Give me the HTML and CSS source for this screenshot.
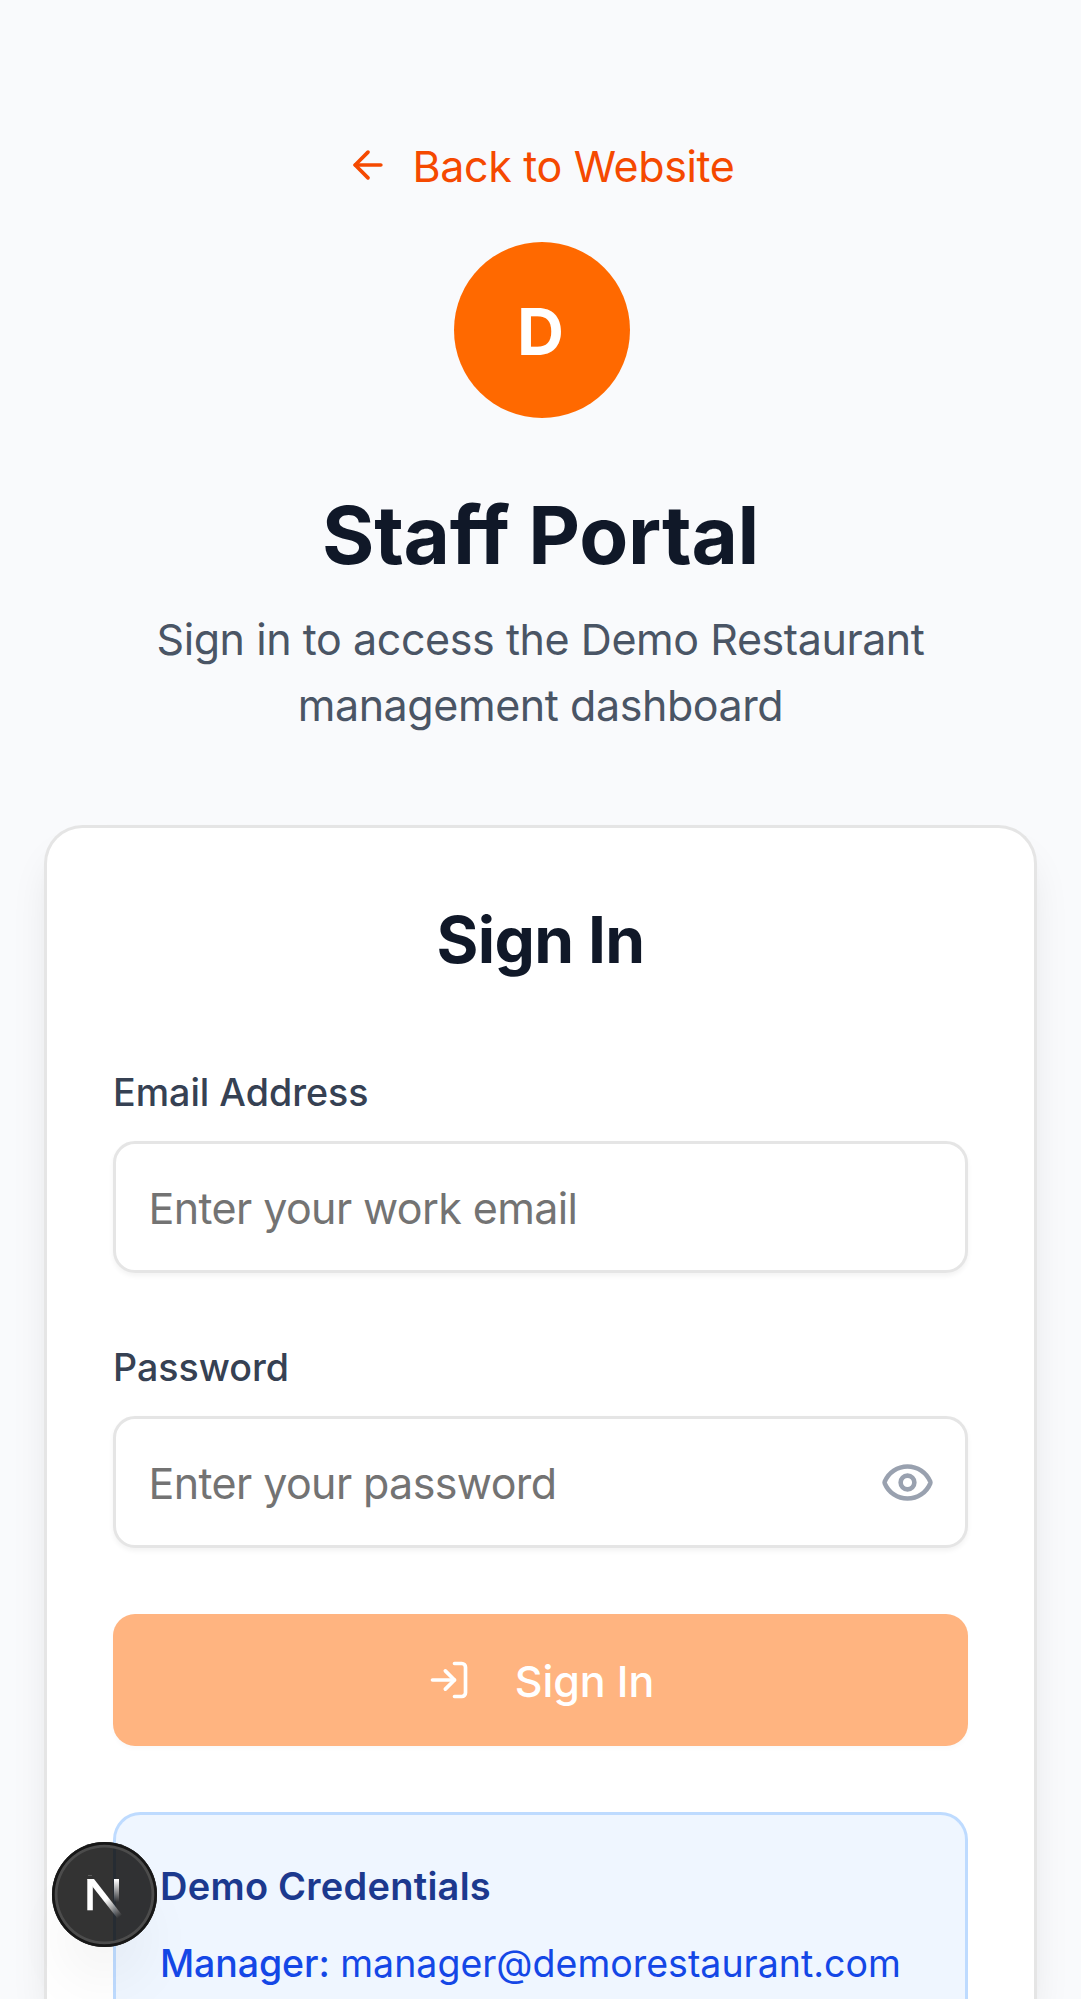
FILE: index.html
```html
<!DOCTYPE html>
<html lang="en">
<head>
<meta charset="utf-8">
<title>Staff Portal</title>
<link rel="stylesheet" href="styles.css">
</head>
<body>
<main class="page">
  <header class="intro">
    <a class="back" href="#">
      <svg class="icon" viewBox="0 0 24 24"><path d="m12 19-7-7 7-7"/><path d="M19 12H5"/></svg>
      <span class="back-text">Back to Website</span>
    </a>
    <div class="logo">D</div>
    <h1 class="title">Staff Portal</h1>
    <p class="lead">Sign in to access the Demo Restaurant<br>management dashboard</p>
  </header>
  <section class="card">
    <h2 class="card-title">Sign In</h2>
    <form class="form">
      <div class="field">
        <label class="label" for="email">Email Address</label>
        <div class="control"><input class="input" id="email" type="email" placeholder="Enter your work email"></div>
      </div>
      <div class="field">
        <label class="label" for="password">Password</label>
        <div class="control">
          <input class="input" id="password" type="password" placeholder="Enter your password">
          <svg class="icon eye" viewBox="0 0 24 24"><path d="M2.062 12.348a1 1 0 0 1 0-.696 10.75 10.75 0 0 1 19.876 0 1 1 0 0 1 0 .696 10.75 10.75 0 0 1-19.876 0"/><circle cx="12" cy="12" r="3"/></svg>
        </div>
      </div>
      <button class="submit" type="button">
        <svg class="icon" viewBox="0 0 24 24"><path d="m10 17 5-5-5-5"/><path d="M15 12H3"/><path d="M15 3h4a2 2 0 0 1 2 2v14a2 2 0 0 1-2 2h-4"/></svg>
        <span class="submit-text">Sign In</span>
      </button>
    </form>
    <div class="demo">
      <h3 class="demo-title">Demo Credentials</h3>
      <p class="demo-row"><strong class="demo-role">Manager:</strong> <span class="demo-mail">manager@demorestaurant.com</span></p>
    </div>
  </section>
</main>
<div class="badge">
  <svg class="badge-mark" viewBox="0 0 105 105">
    <defs>
      <linearGradient id="diag" x1="56" y1="56" x2="69" y2="74" gradientUnits="userSpaceOnUse"><stop stop-color="#fff"/><stop offset="1" stop-color="#fff" stop-opacity="0"/></linearGradient>
      <linearGradient id="stem" x1="0" y1="38" x2="0" y2="60" gradientUnits="userSpaceOnUse"><stop stop-color="#fff"/><stop offset="1" stop-color="#fff" stop-opacity="0"/></linearGradient>
    </defs>
    <rect x="35.3" y="37" width="5.5" height="31.3" fill="#fff"/>
    <path d="M35.3 37H42L70 73L65.5 76.5L40.8 45Z" fill="url(#diag)"/>
    <rect x="62" y="37" width="5" height="23" fill="url(#stem)"/>
    <rect x="36" y="33" width="4" height="1" fill="#fff" opacity=".2"/>
  </svg>
</div>
</body>
</html>
```
FILE: styles.css
```css
* { box-sizing: border-box; margin: 0; }
html, body { height: 1999px; overflow: hidden; }
body {
  position: relative;
  background: #f9fafc;
  color: #101828;
  font-family: Inter, sans-serif;
  font-size: 43px;
  line-height: 66px;
}
.page { display: flex; flex-direction: column; height: 1999px; padding: 132px 44px 0; overflow: hidden; }
.icon {
  width: 44px;
  height: 44px;
  flex: none;
  fill: none;
  stroke: currentColor;
  stroke-width: 2;
  stroke-linecap: round;
  stroke-linejoin: round;
}
.intro { display: flex; flex-direction: column; align-items: center; text-align: center; }
.back { display: flex; align-items: center; gap: 22px; height: 66px; color: #f54900; text-decoration: none; }
.back-text { padding-top: 2px; letter-spacing: -.36px; }
.logo {
  width: 176px;
  height: 176px;
  margin: 44px 0 0 2px;
  padding-right: 2px;
  border-radius: 50%;
  background: #ff6900;
  color: #fff;
  font-size: 65px;
  font-weight: 700;
  line-height: 179px;
}
.title { margin-top: 67px; font-size: 80px; font-weight: 700; letter-spacing: -.25px; line-height: 99px; font-variant-ligatures: none; }
.lead { margin-top: 22px; color: #4a5565; letter-spacing: -.43px; }
.card {
  display: flex;
  flex: 1;
  flex-direction: column;
  margin-top: 87px;
  padding: 67px 66px 0;
  border: 3px solid #e5e5e5;
  border-bottom: 0;
  border-radius: 38.5px 38.5px 0 0;
  background: #fff;
  box-shadow: 0 27px 41px -8px rgb(0 0 0 / .1), 0 11px 16px -11px rgb(0 0 0 / .1);
}
.card-title { font-size: 64px; font-weight: 700; letter-spacing: -.65px; line-height: 90px; text-align: center; }
.form { display: flex; flex-direction: column; gap: 66px; margin-top: 79px; }
.label { display: block; margin-bottom: 21px; padding-top: 1px; color: #364153; font-size: 37.6px; font-weight: 500; line-height: 55px; }
.control { position: relative; display: flex; }
.input {
  width: 100%;
  height: 132px;
  padding: 1px 33px 0 32.5px;
  border: 3px solid #e5e5e5;
  border-radius: 22px;
  background: #fff;
  box-shadow: 0 3px 5px rgb(0 0 0 / .05);
  font: inherit;
  letter-spacing: -.6px;
}
.input::placeholder { color: #737373; opacity: 1; }
.eye { position: absolute; top: 39px; right: 33px; width: 55px; height: 55px; color: #99a1af; }
.submit {
  display: flex;
  align-items: center;
  justify-content: center;
  gap: 44px;
  height: 132px;
  padding: 0;
  border: 0;
  border-radius: 22px;
  background: #ffb480;
  box-shadow: 0 3px 5px rgb(0 0 0 / .025);
  color: #fff;
  font: inherit;
  font-weight: 500;
}
.submit-text { padding-top: 2px; letter-spacing: -.1px; }
.demo {
  flex: 1;
  margin-top: 66px;
  padding: 44px 44px 0;
  border: 3px solid #bedbff;
  border-bottom: 0;
  border-radius: 27.5px 27.5px 0 0;
  background: #eff6ff;
  font-size: 37.5px;
}
.demo-title { color: #1c398e; font-size: 38px; font-weight: 600; letter-spacing: .25px; line-height: 55px; }
.demo-row { margin-top: 22px; color: #1447e6; line-height: 55px; white-space: nowrap; }
.demo-role { font-weight: 550; letter-spacing: -.1px; }
.badge {
  position: absolute;
  left: 52px;
  top: 1842px;
  width: 105px;
  height: 105px;
  border-radius: 50%;
  background: rgb(0 0 0 / .8);
  box-shadow: inset 0 0 0 2.7px #171717, inset 0 0 0 5.5px #4c4c4c, 0 44px 60px -10px rgb(0 0 0 / .05);
}
.badge-mark { display: block; }
```
